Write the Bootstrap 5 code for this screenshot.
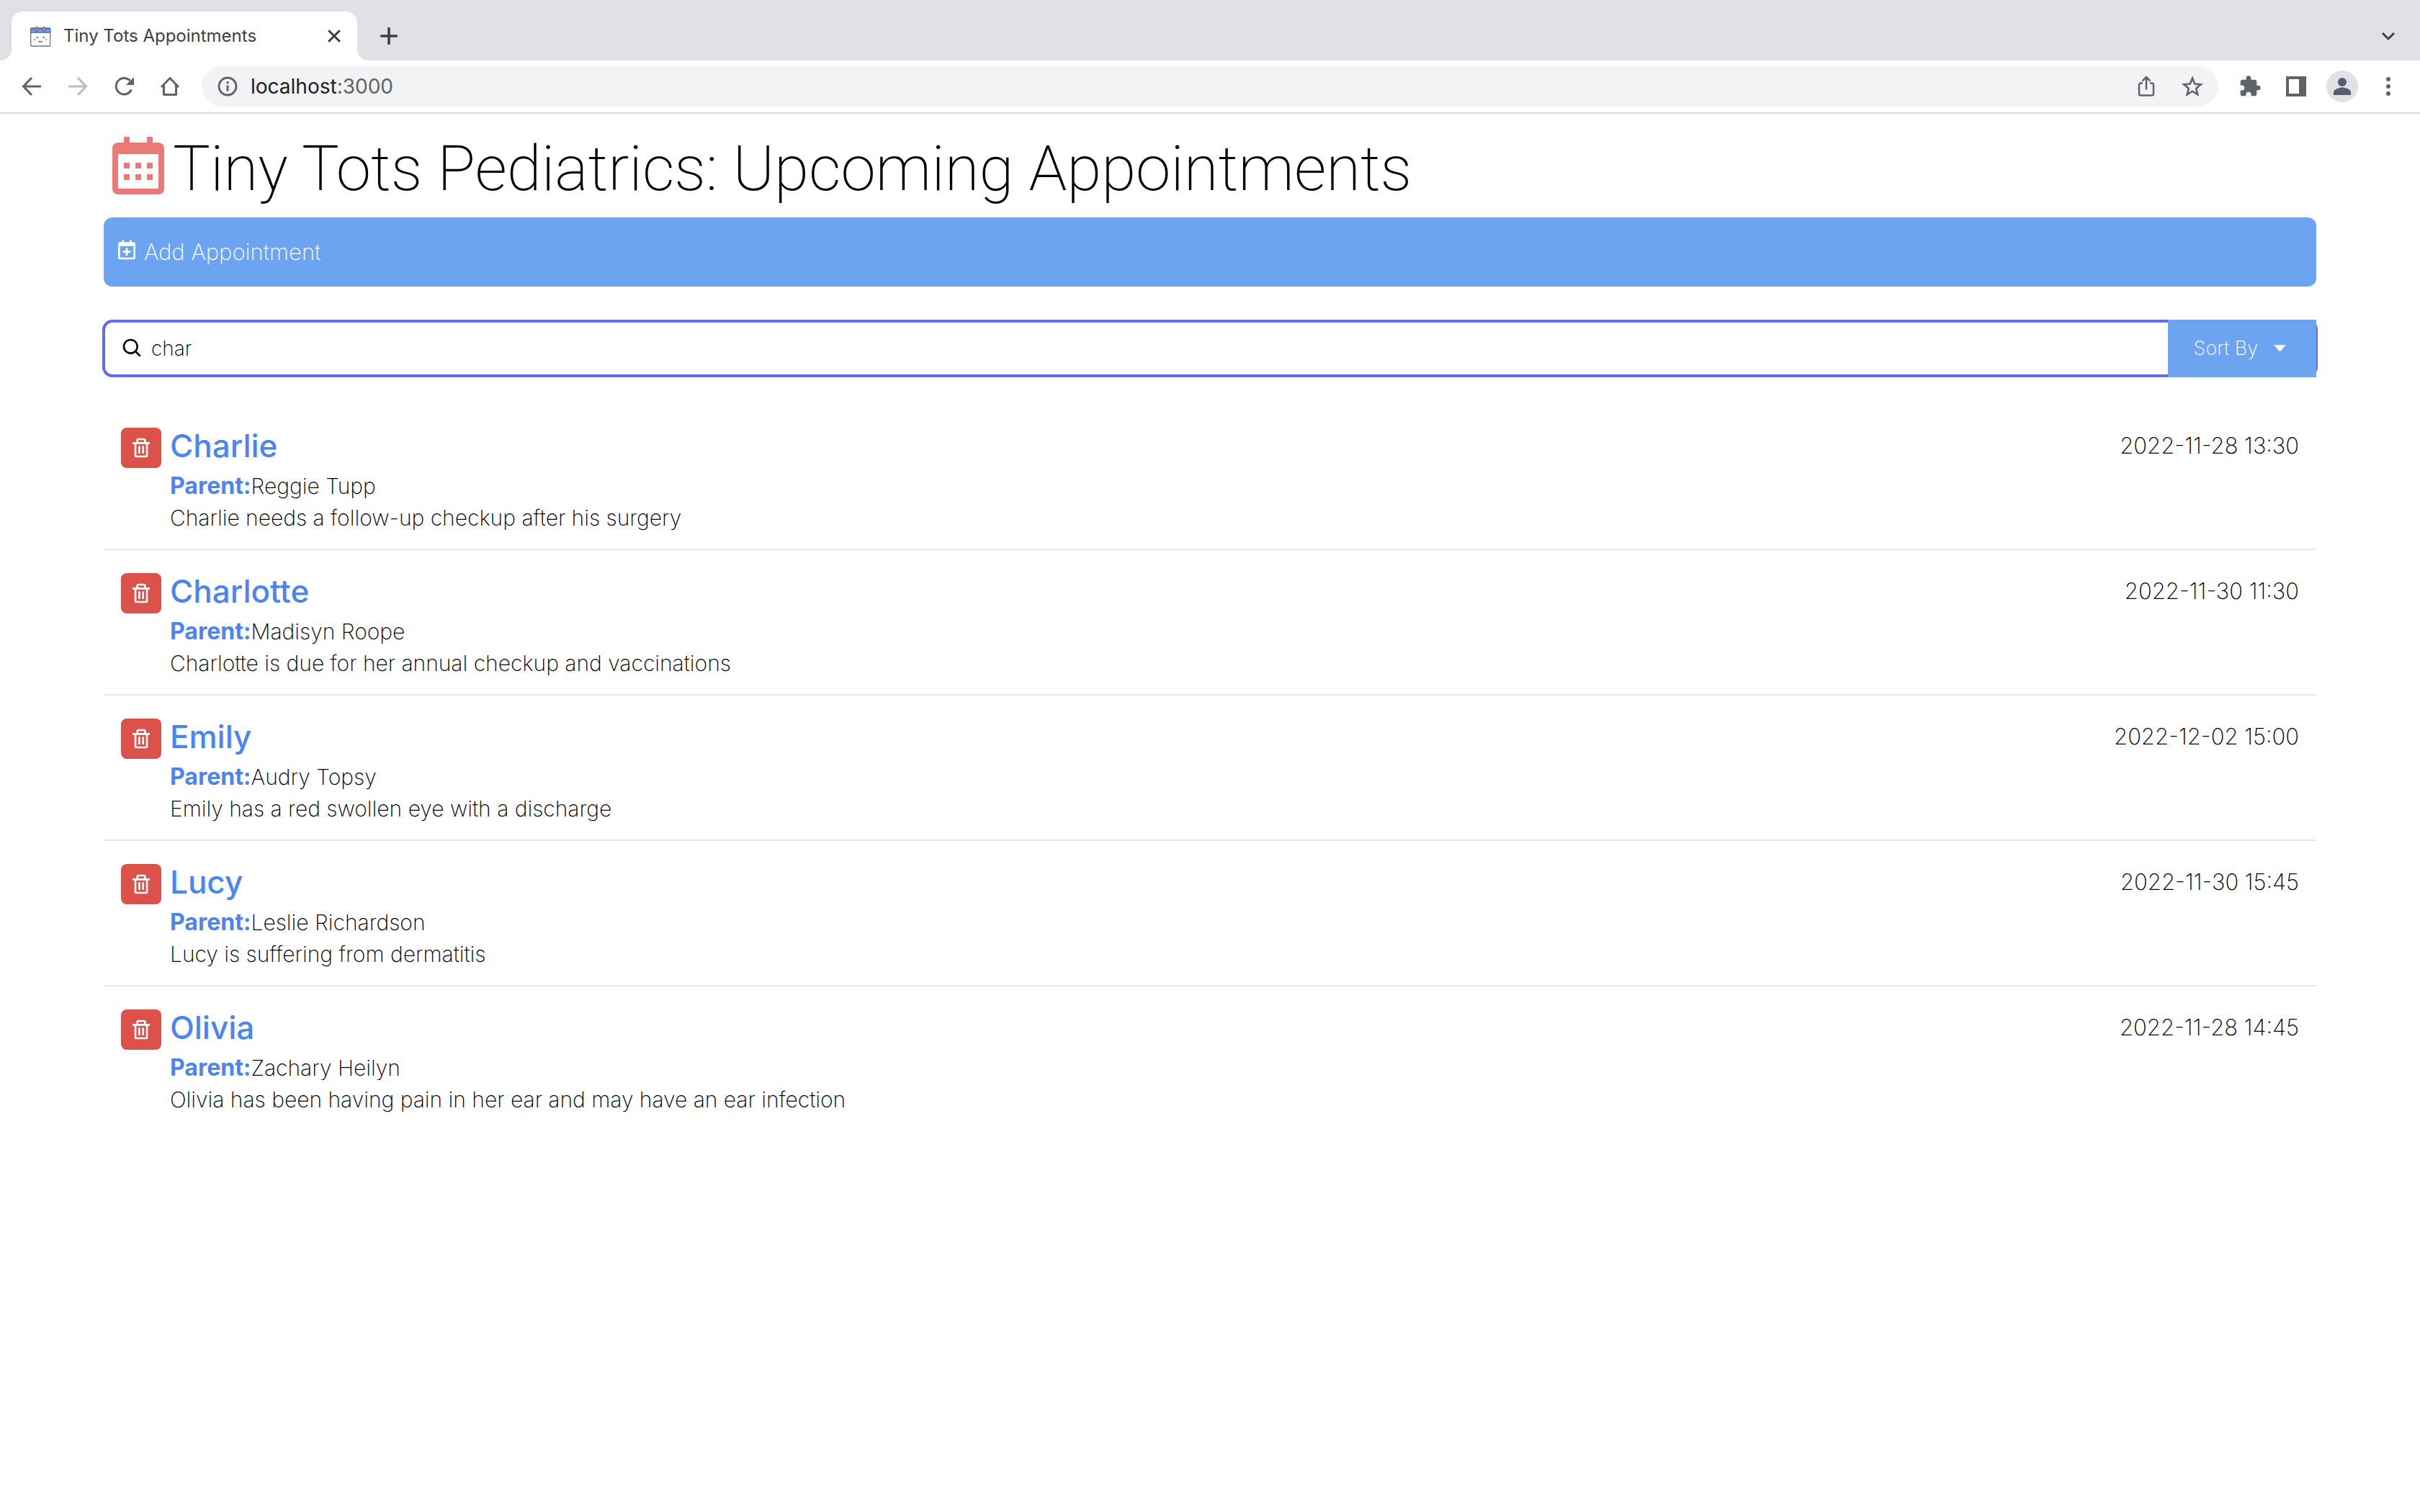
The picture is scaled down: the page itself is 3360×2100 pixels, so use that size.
<!DOCTYPE html>
<html lang="en">
<head>
<meta charset="utf-8">
<meta name="viewport" content="width=device-width, initial-scale=1">
<title>Tiny Tots Appointments</title>
<link href="https://cdn.jsdelivr.net/npm/bootstrap@5.3.0/dist/css/bootstrap.min.css" rel="stylesheet">
<style>
body{font-family:Inter,"Liberation Sans",sans-serif;font-size:30px;font-weight:200;color:#000;background:#fff}
svg{display:block;flex:none}
button{font:inherit}
.tab-strip{height:84px;background:#dfe1e5;padding:16px 30px 0 16px}
.page-tab{width:480px;height:68px;background:#fff;border-radius:16px 16px 0 0;padding:0 22px 0 24px;font-size:24px;font-weight:400;color:#3c4043;position:relative}
.page-tab::before,.page-tab::after{content:"";position:absolute;bottom:0;width:16px;height:16px}
.page-tab::before{left:-16px;background:radial-gradient(circle at 0 0,transparent 16px,#fff 16px)}
.page-tab::after{right:-16px;background:radial-gradient(circle at 100% 0,transparent 16px,#fff 16px)}
.plain{border:0;background:none;padding:0;color:inherit}
.toolbar{height:74px;padding:0 28px;border-bottom:2px solid #dadce0;color:#5f6368}
.address{height:56px;border-radius:28px;background:#f1f3f4;padding:0 20px;margin:0 28px;font-size:28px;font-weight:400}
.address span{color:#202124}
.avatar{width:44px;height:44px;border-radius:50%;background:#dfe1e5;color:#565e6f;margin:0 26px}
.clinic{padding:24px 144px}
.clinic h1{font-family:Roboto,Inter,sans-serif;font-size:87px;line-height:104px;font-weight:200}
.rose{color:#ea7a76}
.add-bar{height:96px;border-radius:12px;background:#6da4f2;color:#fff;padding:0 16px;margin-top:16px;font-size:31px}
.raised{margin-bottom:6px}
.finder{margin:48px 0 40px}
.finder input{display:block;width:100%;height:76px;border:2px solid #626ce8;border-radius:12px;box-shadow:0 0 0 2px #626ce8;padding:0 220px 0 64px;font-size:28px;font-weight:200;color:#000;outline:0}
.finder label{left:24px}
.sorter{right:0;top:-2px;bottom:-2px;background:#6da4f2;color:#fff;font-size:27px;padding:0 42px 0 36px;gap:22px;border:0}
.visit{padding:25px 24px 23px;gap:12px;border-bottom:2px solid #e5e7eb}
.visit:last-child{border-bottom:0}
.bin{width:56px;height:56px;border:0;border-radius:8px;background:#dc524a;color:#fff;margin-top:7px}
.kid{font-size:44px;line-height:64px;font-weight:500;color:#4b85f0;margin:0}
.kin{line-height:48px;height:48px}
.kin b{font-size:32px;font-weight:700;color:#4b85f0}
.note{line-height:40px}
.visit time{font-size:31px;line-height:64px}
</style>
<script src="https://cdn.jsdelivr.net/npm/bootstrap@5.3.0/dist/js/bootstrap.bundle.min.js"></script>
</head>
<body>
<svg class="d-none">
<symbol id="trash" viewBox="0 0 24 24"><path fill="currentColor" d="M5 20a2 2 0 0 0 2 2h10a2 2 0 0 0 2-2V8h2V6h-4V4a2 2 0 0 0-2-2H9a2 2 0 0 0-2 2v2H3v2h2zM9 4h6v2H9zM8 8h9v12H7V8z"/><path fill="currentColor" d="M9 10h2v8H9zm4 0h2v8h-2z"/></symbol>
</svg>
<header>
<div class="tab-strip d-flex">
<div class="page-tab d-flex align-items-center">
<svg width="32" height="32" viewBox="0 0 32 32"><rect x="2.700" y="5" width="27" height="25" rx="1" fill="#fff" stroke="#6b7390" stroke-width="1.300"/><path d="M2.700 5.500h27v6h-27z" fill="#5b9bf3" stroke="#4c5c80" stroke-width=".8"/><path d="M11 4.500v4M21 4.500v4" stroke="#694a50" stroke-width="3.600" stroke-linecap="round"/><path d="M11 4.500v4M21 4.500v4" stroke="#f0957a" stroke-width="2" stroke-linecap="round"/><circle cx="11.500" cy="18" r="1.100" fill="#333c60"/><circle cx="20.500" cy="18" r="1.100" fill="#333c60"/><path d="M13.500 23q2.500 2.500 5 0" fill="none" stroke="#333c60" stroke-width="1.100"/><circle cx="8" cy="21" r="1.300" fill="#f79a90"/><circle cx="24" cy="21" r="1.300" fill="#f79a90"/></svg>
<span class="ms-3 flex-grow-1">Tiny Tots Appointments</span>
<button class="plain" aria-label="Close tab"><svg width="20" height="20" viewBox="0 0 20 20"><path d="M3 3l14 14M17 3L3 17" stroke="#3c4043" stroke-width="3" stroke-linecap="round"/></svg></button>
</div>
<button class="plain ms-4 ps-2" aria-label="New tab"><svg width="24" height="24" viewBox="0 0 24 24"><path d="M12 1.500v21M1.500 12h21" stroke="#3c4043" stroke-width="3.500" stroke-linecap="round"/></svg></button>
<button class="plain ms-auto" aria-label="Search tabs"><svg width="28" height="20" viewBox="0 0 28 20"><path d="M6 6l8 8 8-8" fill="none" stroke="#3c4043" stroke-width="3"/></svg></button>
</div>
<nav class="toolbar d-flex align-items-center" aria-label="Browser">
<button class="plain" aria-label="Back"><svg width="32" height="32" viewBox="0 0 32 32"><path d="M29 16H5M16 4L4.500 16 16 28" fill="none" stroke="currentColor" stroke-width="3"/></svg></button>
<button class="plain ms-4 ps-2" aria-label="Forward"><svg width="32" height="32" viewBox="0 0 32 32" color="#babcbe"><path d="M3 16h24M16 4l11.500 12L16 28" fill="none" stroke="currentColor" stroke-width="3"/></svg></button>
<button class="plain ms-4 ps-2" aria-label="Reload"><svg width="32" height="32" viewBox="0 0 32 32"><path d="M26.500 20.500A11.200 11.200 0 1 1 24.500 8" fill="none" stroke="currentColor" stroke-width="3"/><path d="M30 3v11H19z" fill="currentColor"/></svg></button>
<button class="plain ms-4 ps-2" aria-label="Home"><svg width="32" height="32" viewBox="0 0 32 32"><path d="M4 17L16 4.500 28 17M7.500 14v13.500h17V14" fill="none" stroke="currentColor" stroke-width="3" stroke-linejoin="round"/></svg></button>
<div class="address d-flex align-items-center flex-grow-1">
<svg width="32" height="32" viewBox="0 0 32 32"><circle cx="16" cy="16" r="12" fill="none" stroke="currentColor" stroke-width="2.800"/><path d="M16 14.500v8M16 9v3.200" stroke="currentColor" stroke-width="3"/></svg>
<div class="ms-3 flex-grow-1"><span>localhost</span>:3000</div>
<button class="plain" aria-label="Share"><svg width="32" height="32" viewBox="0 0 32 32"><path d="M11 11.500H8.500q-2.500 0-2.500 2.500v12q0 2.500 2.500 2.500h15q2.500 0 2.500-2.500V14q0-2.500-2.500-2.500H21M16 20.500V4M10.500 8.500L16 3l5.500 5.500" fill="none" stroke="currentColor" stroke-width="2.500"/></svg></button>
<button class="plain ms-4 ps-2" aria-label="Bookmark"><svg width="32" height="32" viewBox="0 0 32 32"><path d="M16 4.500l3.200 8.100 8.600.6-6.600 5.600 2.100 8.500L16 22.700l-7.300 4.600 2.100-8.500-6.600-5.600 8.600-.6z" fill="none" stroke="currentColor" stroke-width="2.600"/></svg></button>
</div>
<button class="plain" aria-label="Extensions"><svg width="32" height="32" viewBox="0 0 24 24"><path fill="currentColor" d="M20.500 11H19V7c0-1.100-.9-2-2-2h-4V3.500a2.500 2.500 0 0 0-5 0V5H4c-1.100 0-2 .9-2 2v3.800h1.500a2.700 2.700 0 0 1 0 5.400H2V20c0 1.100.9 2 2 2h3.800v-1.500a2.700 2.700 0 0 1 5.400 0V22H17c1.100 0 2-.9 2-2v-4h1.500a2.500 2.500 0 0 0 0-5z"/></svg></button>
<button class="plain ms-4 ps-2" aria-label="Side panel"><svg width="32" height="32" viewBox="0 0 32 32"><path fill="currentColor" fill-rule="evenodd" d="M2 2h28v28H2zM6 6v20h14V6z"/></svg></button>
<button class="plain avatar d-flex justify-content-center align-items-center" aria-label="Profile"><svg width="32" height="32" viewBox="0 0 32 32"><circle cx="16" cy="10" r="6" fill="currentColor"/><path d="M4 28v-4c0-4 8-6.500 12-6.500S28 20 28 24v4z" fill="currentColor"/></svg></button>
<button class="plain" aria-label="Menu"><svg width="32" height="32" viewBox="0 0 32 32" fill="currentColor"><circle cx="16" cy="6" r="3"/><circle cx="16" cy="16" r="3"/><circle cx="16" cy="26" r="3"/></svg></button>
</nav>
</header>
<main class="clinic container-fluid">
<h1 class="d-flex m-0"><svg class="rose" width="96" height="96" viewBox="0 0 24 24" fill="currentColor"><path d="M7 11h2v2H7zm0 4h2v2H7zm4-4h2v2h-2zm0 4h2v2h-2zm4-4h2v2h-2zm0 4h2v2h-2z"/><path d="M5 22h14c1.103 0 2-.897 2-2V6c0-1.103-.897-2-2-2h-2V2h-2v2H9V2H7v2H5c-1.103 0-2 .897-2 2v14c0 1.103.897 2 2 2zM19 8l.001 12H5V8h14z"/></svg><span>Tiny Tots Pediatrics: Upcoming Appointments</span></h1>
<button class="add-bar w-100 border-0 d-flex align-items-center gap-2 text-start"><svg class="raised" width="32" height="32" viewBox="0 0 24 24" fill="currentColor"><path d="M8 15h3v3h2v-3h3v-2h-3v-3h-2v3H8z"/><path d="M19 4h-2V2h-2v2H9V2H7v2H5c-1.103 0-2 .897-2 2v14c0 1.103.897 2 2 2h14c1.103 0 2-.897 2-2V6c0-1.103-.897-2-2-2zm.002 16H5V8h14l.002 12z"/></svg><span>Add Appointment</span></button>
<div class="finder position-relative">
<label for="query" class="position-absolute top-50 translate-middle-y"><svg width="32" height="32" viewBox="0 0 24 24" role="img" aria-label="Search"><path d="M10 18a7.952 7.952 0 0 0 4.897-1.688l4.396 4.396 1.414-1.414-4.396-4.396A7.952 7.952 0 0 0 18 10c0-4.411-3.589-8-8-8s-8 3.589-8 8 3.589 8 8 8zm0-14c3.309 0 6 2.691 6 6s-2.691 6-6 6-6-2.691-6-6 2.691-6 6-6z"/></svg></label>
<input type="text" id="query" value="char">
<button class="sorter position-absolute d-flex align-items-center"><span>Sort By</span><svg width="17" height="10" viewBox="0 0 17 10"><path d="M0 0h17L8.500 9.500z" fill="#fff"/></svg></button>
</div>
<ul class="list-unstyled m-0">
<li class="visit d-flex"><button class="bin d-flex align-items-center justify-content-center p-0" aria-label="Delete"><svg width="32" height="32"><use href="#trash"/></svg></button><div class="flex-grow-1"><h2 class="kid">Charlie</h2><div class="kin"><b>Parent:</b>Reggie Tupp</div><div class="note">Charlie needs a follow-up checkup after his surgery</div></div><time>2022-11-28 13:30</time></li>
<li class="visit d-flex"><button class="bin d-flex align-items-center justify-content-center p-0" aria-label="Delete"><svg width="32" height="32"><use href="#trash"/></svg></button><div class="flex-grow-1"><h2 class="kid">Charlotte</h2><div class="kin"><b>Parent:</b>Madisyn Roope</div><div class="note">Charlotte is due for her annual checkup and vaccinations</div></div><time>2022-11-30 11:30</time></li>
<li class="visit d-flex"><button class="bin d-flex align-items-center justify-content-center p-0" aria-label="Delete"><svg width="32" height="32"><use href="#trash"/></svg></button><div class="flex-grow-1"><h2 class="kid">Emily</h2><div class="kin"><b>Parent:</b>Audry Topsy</div><div class="note">Emily has a red swollen eye with a discharge</div></div><time>2022-12-02 15:00</time></li>
<li class="visit d-flex"><button class="bin d-flex align-items-center justify-content-center p-0" aria-label="Delete"><svg width="32" height="32"><use href="#trash"/></svg></button><div class="flex-grow-1"><h2 class="kid">Lucy</h2><div class="kin"><b>Parent:</b>Leslie Richardson</div><div class="note">Lucy is suffering from dermatitis</div></div><time>2022-11-30 15:45</time></li>
<li class="visit d-flex"><button class="bin d-flex align-items-center justify-content-center p-0" aria-label="Delete"><svg width="32" height="32"><use href="#trash"/></svg></button><div class="flex-grow-1"><h2 class="kid">Olivia</h2><div class="kin"><b>Parent:</b>Zachary Heilyn</div><div class="note">Olivia has been having pain in her ear and may have an ear infection</div></div><time>2022-11-28 14:45</time></li>
</ul>
</main>
</body>
</html>
